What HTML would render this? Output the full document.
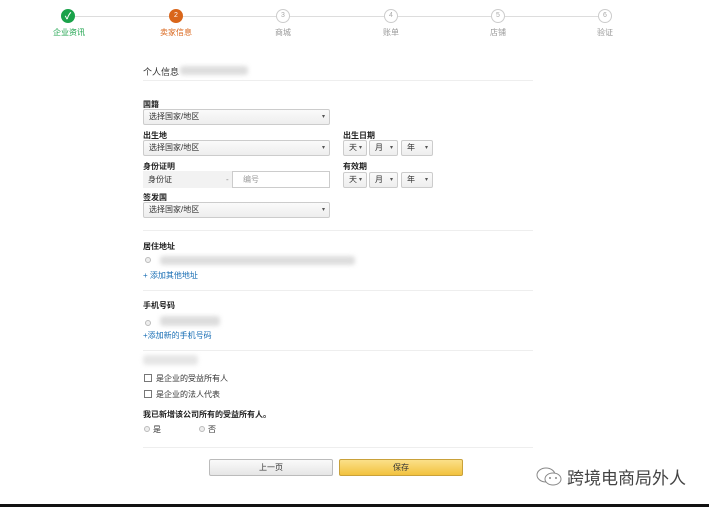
<!DOCTYPE html>
<html><head><meta charset="utf-8"><style>
*{box-sizing:border-box;margin:0;padding:0}
body{width:709px;height:507px;background:#fff;position:relative;overflow:hidden;font-family:"Liberation Sans","Noto Sans CJK SC",sans-serif;font-size:8px;color:#333}
.a{position:absolute}
.line{position:absolute;height:1px;background:#ddd;top:16px}
.c{position:absolute;top:9px;width:14px;height:14px;border-radius:50%;border:1px solid #ccc;background:#fff;color:#aaa;font-size:7px;text-align:center;line-height:12px}
.lab{position:absolute;top:27px;font-size:8px;color:#999;width:60px;text-align:center;margin-left:-30px}
.hr{position:absolute;left:143px;width:390px;height:1px;background:#eee}
.sel{position:absolute;height:16px;border:1px solid #ccc;border-radius:2px;background:linear-gradient(#fafafa,#eee);font-size:8px;line-height:14px;padding-left:5px;color:#333}
.sel:after{content:"▾";position:absolute;right:4px;top:0;font-size:6px;color:#555}
.fl{position:absolute;font-size:8px;font-weight:bold;color:#222}
.blur{position:absolute;background:#ddd;border-radius:3px;filter:blur(2px)}
.rad{position:absolute;width:6px;height:6px;border-radius:50%;border:1px solid #bbb;background:#eee}
.cb{position:absolute;width:8px;height:8px;border:1px solid #777;background:#fff}
.link{position:absolute;color:#1a6fb5;font-size:8px}
</style></head><body>
<div class="line" style="left:75px;width:94px"></div>
<div class="line" style="left:183px;width:93px"></div>
<div class="line" style="left:290px;width:94px"></div>
<div class="line" style="left:398px;width:93px"></div>
<div class="line" style="left:505px;width:93px"></div>
<div class="c" style="left:61px;background:#1aa24a;border-color:#1aa24a;color:#fff;font-size:9px;font-weight:bold">✓</div>
<div class="c" style="left:169px;background:#d9661b;border-color:#d9661b;color:#fff">2</div>
<div class="c" style="left:276px">3</div>
<div class="c" style="left:384px">4</div>
<div class="c" style="left:491px">5</div>
<div class="c" style="left:598px">6</div>
<div class="lab" style="left:69px;color:#1aa24a">企业资讯</div>
<div class="lab" style="left:176px;color:#d9661b">卖家信息</div>
<div class="lab" style="left:283px">商城</div>
<div class="lab" style="left:391px">账单</div>
<div class="lab" style="left:498px">店铺</div>
<div class="lab" style="left:605px">验证</div>

<div class="a" style="left:143px;top:65px;font-size:9px;color:#333">个人信息</div>
<div class="blur" style="left:180px;top:66px;width:68px;height:9px"></div>
<div class="hr" style="top:80px"></div>

<div class="fl" style="left:143px;top:99px">国籍</div>
<div class="sel" style="left:143px;top:109px;width:187px">选择国家/地区</div>
<div class="fl" style="left:143px;top:130px">出生地</div>
<div class="sel" style="left:143px;top:140px;width:187px">选择国家/地区</div>
<div class="fl" style="left:343px;top:130px">出生日期</div>
<div class="sel" style="left:343px;top:140px;width:24px">天</div>
<div class="sel" style="left:369px;top:140px;width:29px">月</div>
<div class="sel" style="left:401px;top:140px;width:32px">年</div>
<div class="fl" style="left:143px;top:161px">身份证明</div>
<div class="a" style="left:143px;top:171px;width:89px;height:17px;background:#f2f2f2;font-size:8px;line-height:17px;padding-left:5px">身份证<span style="position:absolute;left:83px;color:#888">-</span></div>
<div class="a" style="left:232px;top:171px;width:98px;height:17px;border:1px solid #ccc;font-size:8px;line-height:15px;padding-left:10px;color:#999">编号</div>
<div class="fl" style="left:343px;top:161px">有效期</div>
<div class="sel" style="left:343px;top:172px;width:24px">天</div>
<div class="sel" style="left:369px;top:172px;width:29px">月</div>
<div class="sel" style="left:401px;top:172px;width:32px">年</div>
<div class="fl" style="left:143px;top:192px">签发国</div>
<div class="sel" style="left:143px;top:202px;width:187px">选择国家/地区</div>
<div class="hr" style="top:230px"></div>

<div class="fl" style="left:143px;top:241px">居住地址</div>
<div class="rad" style="left:145px;top:257px"></div>
<div class="blur" style="left:160px;top:256px;width:195px;height:9px"></div>
<div class="link" style="left:143px;top:270px">+ 添加其他地址</div>
<div class="hr" style="top:290px"></div>
<div class="fl" style="left:143px;top:300px">手机号码</div>
<div class="rad" style="left:145px;top:320px"></div>
<div class="blur" style="left:160px;top:316px;width:60px;height:10px"></div>
<div class="link" style="left:143px;top:330px">+添加新的手机号码</div>
<div class="hr" style="top:350px"></div>
<div class="blur" style="left:143px;top:355px;width:55px;height:10px;background:#e6e6e6"></div>
<div class="cb" style="left:144px;top:374px"></div>
<div class="a" style="left:156px;top:373px">是企业的受益所有人</div>
<div class="cb" style="left:144px;top:390px"></div>
<div class="a" style="left:156px;top:389px">是企业的法人代表</div>
<div class="fl" style="left:143px;top:409px">我已新增该公司所有的受益所有人。</div>
<div class="rad" style="left:144px;top:426px"></div>
<div class="a" style="left:153px;top:424px">是</div>
<div class="rad" style="left:199px;top:426px"></div>
<div class="a" style="left:208px;top:424px">否</div>
<div class="hr" style="top:447px"></div>

<div class="a" style="left:209px;top:459px;width:124px;height:17px;border:1px solid #bbb;border-radius:2px;background:linear-gradient(#fafafa,#e6e6e6);text-align:center;line-height:15px;font-size:8px">上一页</div>
<div class="a" style="left:339px;top:459px;width:124px;height:17px;border:1px solid #c9a13a;border-radius:2px;background:linear-gradient(#fbe08a,#f2c23f);text-align:center;line-height:15px;font-size:8px">保存</div>

<svg class="a" style="left:535px;top:466px" width="30" height="22" viewBox="0 0 30 22"><ellipse cx="11" cy="9" rx="9" ry="7" fill="none" stroke="#888" stroke-width="1"/><ellipse cx="18" cy="13" rx="8" ry="6" fill="#fff" stroke="#888" stroke-width="1"/><circle cx="15" cy="12" r="1" fill="#888"/><circle cx="21" cy="12" r="1" fill="#888"/></svg>
<div class="a" style="left:567px;top:464px;font-size:17px;color:#444;letter-spacing:0px">跨境电商局外人</div>
<div class="a" style="left:0;top:504px;width:709px;height:3px;background:#111"></div>
</body></html>
